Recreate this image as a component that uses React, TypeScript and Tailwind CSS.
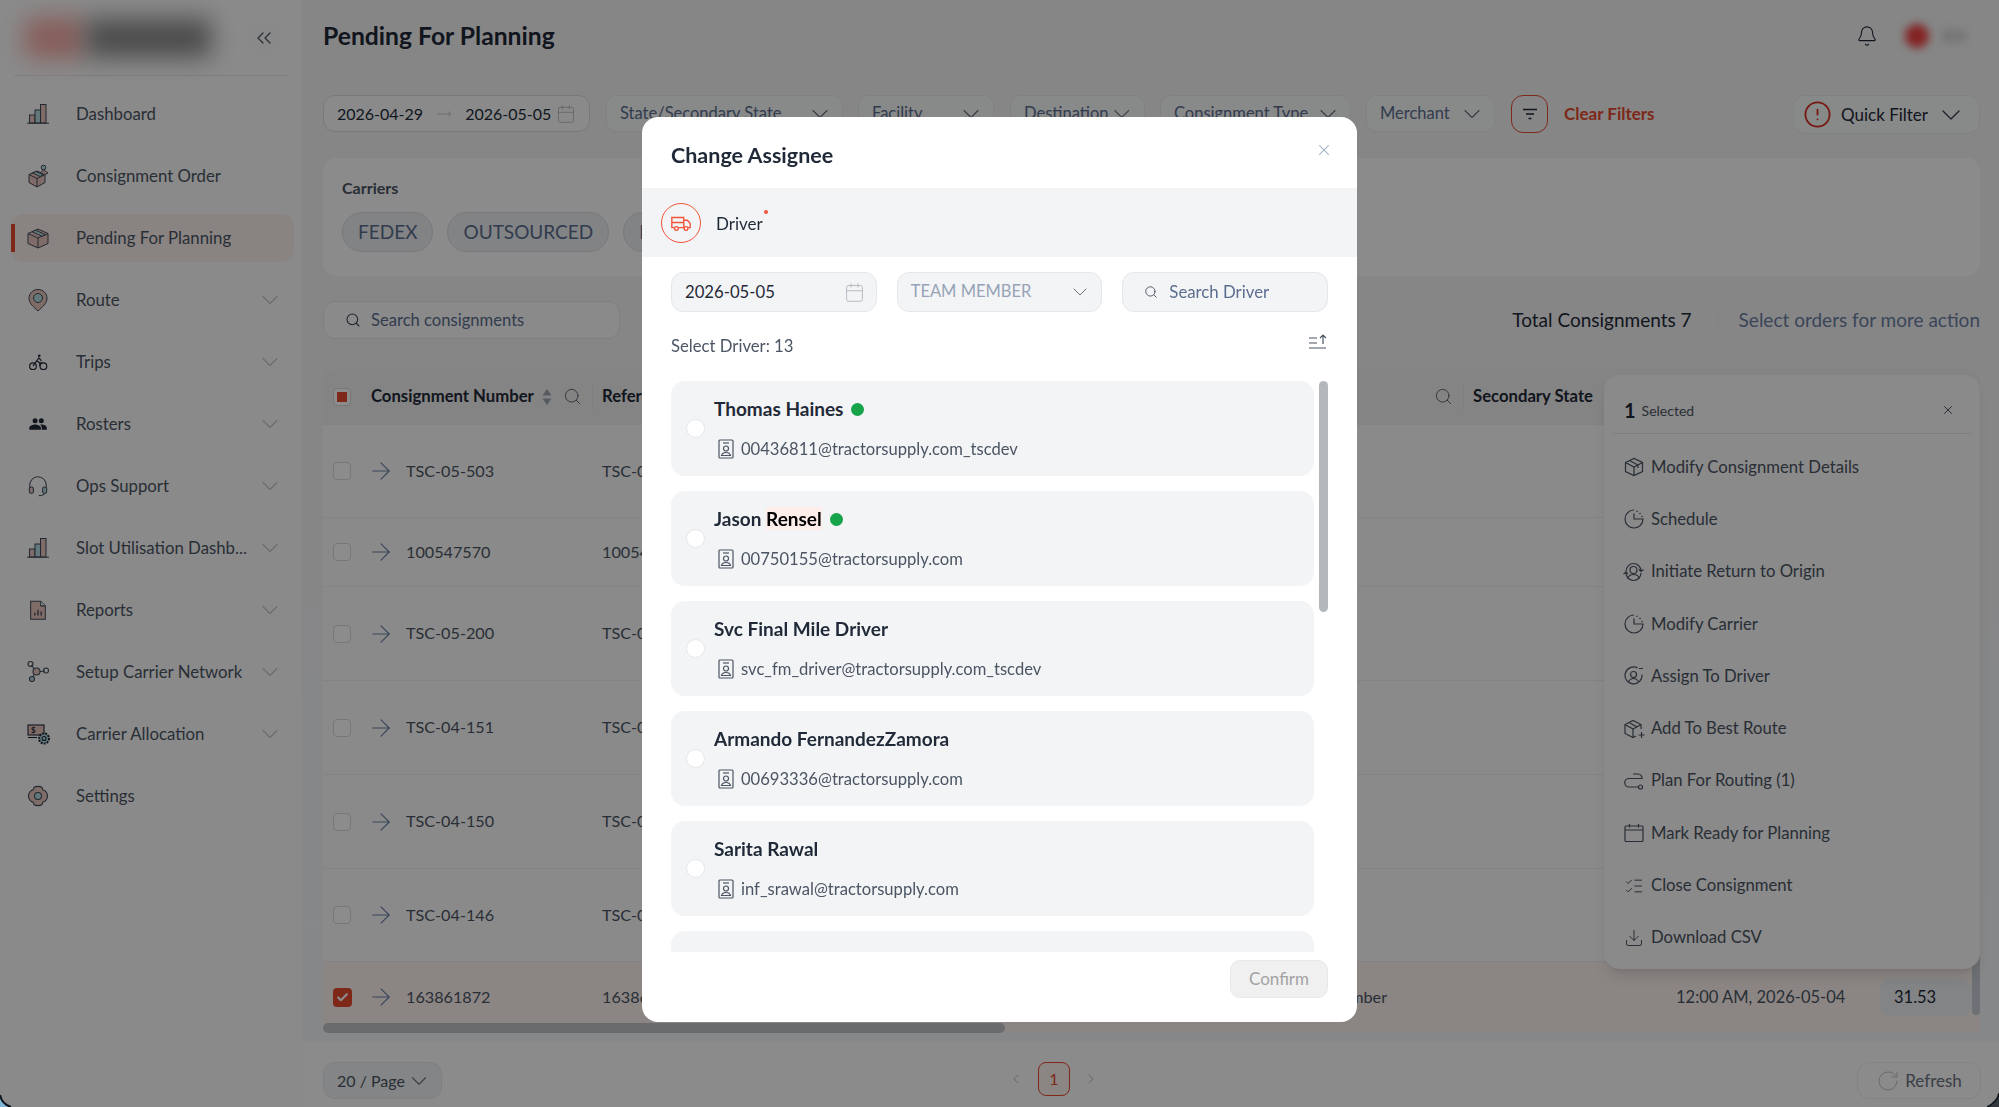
import {
  ArrowRight,
  Bell,
  Calendar,
  Check,
  ChevronDown,
  ChevronLeft,
  ChevronRight,
  ChevronsLeft,
  CircleAlert,
  Download,
  ListChecks,
  MoveRight,
  RotateCw,
  Search,
  X,
} from "lucide-react";
import type { ReactNode } from "react";

const PINK = "#e8c4bc";
const TEAL = "#b5dbe0";
const INK = "#3f4a57";

function BarsIcon() {
  return (
    <svg viewBox="0 0 24 24" className="h-6 w-6" fill="none" stroke={INK} strokeWidth="1">
      <rect x="3.5" y="13" width="5.5" height="8" fill={PINK} />
      <rect x="9" y="8" width="5.5" height="13" fill={TEAL} />
      <rect x="14.5" y="2.5" width="5.5" height="18.5" fill={PINK} />
      <path d="M1 21.2h22" />
    </svg>
  );
}

function BoxPersonIcon() {
  return (
    <svg viewBox="0 0 24 24" className="h-6 w-6" fill="none" stroke={INK} strokeWidth="1">
      <circle cx="17.5" cy="3.5" r="2.3" fill={TEAL} />
      <path d="M3 10.5 11 7l8 3.5v8L11 23l-8-4.5z" fill={PINK} />
      <path d="M3 10.5 11 14.5l8-4M11 14.5V23" />
      <path d="M6.5 8.800 14 12.5l3.5-1.700L10 7.5z" fill={TEAL} />
      <path d="M15 7.5c2-1.5 5-1 7 1.5l-3 1.5" fill={PINK} />
    </svg>
  );
}

function BoxIcon() {
  return (
    <svg viewBox="0 0 24 24" className="h-6 w-6" fill="none" stroke={INK} strokeWidth="1">
      <path d="M2 7.5 12 3l10 4.5v10L12 22 2 17.5z" fill={PINK} />
      <path d="M2 7.5 12 12l10-4.5M12 12v10" />
      <path d="M6 5.700 16 10.200l3.500-1.500L9.500 4.200z" fill={TEAL} />
    </svg>
  );
}

function PinIcon() {
  return (
    <svg viewBox="0 0 24 24" className="h-6 w-6" fill="none" stroke={INK} strokeWidth="1">
      <path d="M12 1.500c-5 0-9 3.800-9 8.700 0 5.300 5 9 9 12.800 4-3.800 9-7.500 9-12.800 0-4.900-4-8.700-9-8.700z" fill={PINK} />
      <circle cx="12" cy="10" r="4.500" fill={TEAL} />
    </svg>
  );
}

function BikeIcon() {
  return (
    <svg viewBox="0 0 24 24" className="h-5 w-5" fill="none" stroke="#1f2937" strokeWidth="1.4">
      <circle cx="6" cy="17" r="4" />
      <circle cx="18.500" cy="17" r="4" />
      <circle cx="13.500" cy="4.500" r="1.600" fill="#1f2937" stroke="none" />
      <path d="M6 17l4.500-6.500 3.500 2.500h3.500M10.500 10.500 13 7l3 3.500M14 13v4" />
    </svg>
  );
}

function PeopleIcon() {
  return (
    <svg viewBox="0 0 24 24" className="h-5 w-5" fill="#1f2937">
      <circle cx="8.500" cy="8" r="3" />
      <circle cx="16" cy="8" r="3" />
      <path d="M1.500 19v-2.500c0-2.500 4.500-4 7-4s7 1.500 7 4V19zM16.500 19v-2.500c0-1.500-.8-2.800-2-3.800 3-.6 8 .8 8 3.800V19z" />
    </svg>
  );
}

function HeadsetIcon() {
  return (
    <svg viewBox="0 0 24 24" className="h-[22px] w-[22px]" fill="none" stroke={INK} strokeWidth="1.1">
      <path d="M3 14v-3a9 9 0 0 1 18 0v3" />
      <rect x="2.500" y="13" width="4.500" height="7" rx="2" fill={PINK} />
      <rect x="17" y="13" width="4.500" height="7" rx="2" fill={TEAL} />
      <path d="M19 20c0 2-2 2.500-6 2.500" />
    </svg>
  );
}

function ReportIcon() {
  return (
    <svg viewBox="0 0 24 24" className="h-[22px] w-[22px]" fill="none" stroke={INK} strokeWidth="1.1">
      <path d="M4 2.500h11l5 5V22H4z" fill={PINK} />
      <path d="M15 2.500v5h5" fill="#fff" />
      <path d="M8.500 18v-3M12 18v-6M15.500 18v-4.500" strokeWidth="1.500" />
    </svg>
  );
}

function NetworkIcon() {
  return (
    <svg viewBox="0 0 24 24" className="h-6 w-6" fill="none" stroke={INK} strokeWidth="1.1">
      <path d="M5 5l5 6M10 12l9-1M10 12l-4 6" />
      <circle cx="4.500" cy="4" r="2.500" />
      <circle cx="10.500" cy="11.500" r="3.500" fill={PINK} />
      <circle cx="20" cy="10.500" r="2.500" />
      <circle cx="6" cy="19" r="2.500" fill={TEAL} />
    </svg>
  );
}

function MoneyGearIcon() {
  return (
    <svg viewBox="0 0 24 24" className="h-6 w-6" fill="none" stroke="#1f2937" strokeWidth="1.1">
      <rect x="2" y="3" width="16" height="10" fill={PINK} />
      <text x="5" y="11" fontSize="8" fontWeight="700" fill="#1f2937" stroke="none" fontFamily="Lato">
        $
      </text>
      <path d="M2 15.500h9" />
      <circle cx="18" cy="16.500" r="5" fill={TEAL} strokeDasharray="2 1" strokeWidth="2" />
      <circle cx="18" cy="16.500" r="2" />
    </svg>
  );
}

function GearIcon() {
  return (
    <svg viewBox="0 0 24 24" className="h-6 w-6" fill="none" stroke={INK} strokeWidth="1.1">
      <path
        d="M8 3.500c1.500-1.500 6.500-1.500 8 0l1 2.500c2.500 0 4.500 3.500 4.500 6s-2 6-4.500 6l-1 2.500c-1.500 1.500-6.500 1.500-8 0L7 18c-2.500 0-4.500-3.500-4.500-6S4.500 6 7 6z"
        fill={PINK}
      />
      <circle cx="12" cy="12" r="3.500" fill={TEAL} />
    </svg>
  );
}

const navItems: { label: string; icon: ReactNode; caret?: boolean; active?: boolean }[] = [
  { label: "Dashboard", icon: <BarsIcon /> },
  { label: "Consignment Order", icon: <BoxPersonIcon /> },
  { label: "Pending For Planning", icon: <BoxIcon />, active: true },
  { label: "Route", icon: <PinIcon />, caret: true },
  { label: "Trips", icon: <BikeIcon />, caret: true },
  { label: "Rosters", icon: <PeopleIcon />, caret: true },
  { label: "Ops Support", icon: <HeadsetIcon />, caret: true },
  { label: "Slot Utilisation Dashb...", icon: <BarsIcon />, caret: true },
  { label: "Reports", icon: <ReportIcon />, caret: true },
  { label: "Setup Carrier Network", icon: <NetworkIcon />, caret: true },
  { label: "Carrier Allocation", icon: <MoneyGearIcon />, caret: true },
  { label: "Settings", icon: <GearIcon /> },
];

function Sidebar() {
  return (
    <aside className="flex w-[302px] shrink-0 flex-col bg-[#fcfcfc]">
      <div className="flex h-[75px] items-center justify-between pl-6 pr-[20px]">
        <div className="flex items-center">
          <div className="h-[40px] w-[62px] rounded-xl bg-[#f4a8a2] blur-md" />
          <div className="h-[38px] w-[125px] bg-[#888888] blur-md" />
        </div>
        <div className="flex h-9 w-9 items-center justify-center rounded-full bg-[#fafafa]">
          <ChevronsLeft className="h-6 w-6 text-[#4b5563]" strokeWidth={1.3} />
        </div>
      </div>
      <div className="mx-[14px] border-t border-[#e8e8e8]" />
      <nav className="mt-[7px] flex flex-col">
        {navItems.map((item) => (
          <div key={item.label} className="relative ml-[11px] mr-[8px] flex h-[62px] items-center">
            {item.active && (
              <div className="absolute inset-x-0 top-[7px] h-[48px] rounded-xl bg-[#faf1ed]">
                <div className="absolute left-0 top-[10px] h-[28px] w-1 bg-[#e5492f]" />
              </div>
            )}
            <span className="relative ml-[15px] mr-[26px] flex w-6 shrink-0 justify-center">{item.icon}</span>
            <span className="relative text-[16.8px] text-[#4b5563]">{item.label}</span>
            {item.caret && (
              <ChevronDown className="absolute right-[10px] h-7 w-7 text-[#c4c4c4]" strokeWidth={1} />
            )}
          </div>
        ))}
      </nav>
    </aside>
  );
}

function FilterSelect({ label, className }: { label: string; className: string }) {
  return (
    <div
      className={`flex h-[37px] items-center justify-between rounded-[10px] border border-[#ececec] bg-[#f8f9fa] pl-[13px] pr-[8px] ${className}`}
    >
      <span className="text-[16.5px] text-[#5b6d8e]">{label}</span>
      <ChevronDown className="h-7 w-7 text-[#6b7280]" strokeWidth={1} />
    </div>
  );
}

function Toolbar() {
  return (
    <div className="mt-[23px] flex items-start">
      <div className="flex h-[37px] w-[267px] items-center rounded-[12px] border border-[#dcdcdc] bg-[#fbfbfb] pl-[13px]">
        <span className="text-base text-[#222b38]">2026-04-29</span>
        <MoveRight className="mx-[13px] h-[18px] w-[16px] text-[#bdbdbd]" strokeWidth={1.2} />
        <span className="text-base text-[#222b38]">2026-05-05</span>
        <Calendar className="ml-[5px] h-5 w-5 text-[#bdbdbd]" strokeWidth={1.1} />
      </div>
      <FilterSelect label="State/Secondary State" className="ml-[16px] w-[237px]" />
      <FilterSelect label="Facility" className="ml-[15px] w-[136px]" />
      <FilterSelect label="Destination" className="ml-[16px] w-[135px]" />
      <FilterSelect label="Consignment Type" className="ml-[15px] w-[191px]" />
      <FilterSelect label="Merchant" className="ml-[15px] w-[129px]" />
      <div className="ml-[16px] flex h-[38px] w-[37px] items-center justify-center rounded-[12px] border border-[#e5492f]">
        <svg viewBox="0 0 20 20" className="h-5 w-5" fill="none" stroke="#1f2937" strokeWidth="1.3">
          <path d="M3 5.500h14M6 10h8M8.500 14.500h3" />
        </svg>
      </div>
      <span className="ml-[16px] mt-[6px] text-[17px] font-bold text-[#e5492f]">Clear Filters</span>
      <div className="ml-auto flex h-[39px] w-[187px] items-center rounded-[12px] border border-[#ececec] bg-[#f8f9fa] pl-[9px]">
        <CircleAlert className="h-[29px] w-[29px] text-[#d92d20]" strokeWidth={1.5} />
        <span className="ml-[9px] text-[17px] text-[#1f2937]">Quick Filter</span>
        <ChevronDown className="ml-[7px] h-8 w-8 text-[#374151]" strokeWidth={1} />
      </div>
    </div>
  );
}

function Carriers() {
  return (
    <div className="mt-[24px] h-[118px] rounded-[14px] bg-[#fdfdfd] pl-[19px] pt-[20px]">
      <p className="text-base font-bold leading-5 text-[#4b5563]">Carriers</p>
      <div className="mt-[14px] flex gap-[14px]">
        {["FEDEX", "OUTSOURCED", "FLEET"].map((name) => (
          <span
            key={name}
            className="flex h-[40px] items-center rounded-full border border-[#d9dde3] bg-[#eceef1] px-[15px] text-[19px] text-[#5b6d8e]"
          >
            {name}
          </span>
        ))}
      </div>
    </div>
  );
}

function SearchRow() {
  return (
    <div className="mt-[25px] flex h-[38px] items-center">
      <div className="flex h-[38px] w-[297px] items-center rounded-[12px] border border-[#e8e8e8] bg-[#fbfbfb] pl-[21px]">
        <Search className="h-4 w-4 text-[#374151]" strokeWidth={1.6} />
        <span className="ml-[10px] text-[16.6px] text-[#5b6d8e]">Search consignments</span>
      </div>
      <span className="ml-auto text-[19px] text-[#1f2937]">Total Consignments 7</span>
      <div className="ml-[26px] mr-[20px] h-5 border-l border-[#eeeeee]" />
      <span className="text-[19px] text-[#6b7fa3]">Select orders for more action</span>
    </div>
  );
}

const rows: { id: string; ref: string; height: string }[] = [
  { id: "TSC-05-503", ref: "TSC-05-503", height: "h-[93px]" },
  { id: "100547570", ref: "100547570", height: "h-[69px]" },
  { id: "TSC-05-200", ref: "TSC-05-200", height: "h-[94px]" },
  { id: "TSC-04-151", ref: "TSC-04-151", height: "h-[94px]" },
  { id: "TSC-04-150", ref: "TSC-04-150", height: "h-[94px]" },
  { id: "TSC-04-146", ref: "TSC-04-146", height: "h-[93px]" },
];

function SortCarets() {
  return (
    <svg viewBox="0 0 10 18" className="h-[18px] w-[10px]" fill="#9ca3af">
      <path d="M5 1l4.500 6.500h-9zM5 17 .5 10.500h9z" />
    </svg>
  );
}

function ConsignmentTable() {
  return (
    <div className="relative mt-[30px] h-[664px] overflow-hidden rounded-t-[12px]">
      <div className="flex h-[56px] items-center border-b border-[#eeeeee] bg-[#f0f0f0]">
        <span className="ml-[10px] flex h-[18px] w-[18px] items-center justify-center rounded-[4px] border border-[#d9d9d9] bg-white">
          <span className="h-[10px] w-[10px] bg-[#e5492f]" />
        </span>
        <span className="ml-[20px] w-[168px] text-[16.7px] font-bold text-[#1f2937]">Consignment Number</span>
        <span className="ml-[3px] flex">
          <SortCarets />
        </span>
        <Search className="ml-[11px] h-[19px] w-[19px] text-[#4b5563]" strokeWidth={1.1} />
        <span className="ml-[10px] h-[26px] border-l border-[#e5e5e5]" />
        <span className="ml-[9px] w-[832px] text-[16.7px] font-bold text-[#1f2937]">Reference Number</span>
        <Search className="h-[19px] w-[19px] text-[#4b5563]" strokeWidth={1.1} />
        <span className="ml-[10px] h-[26px] border-l border-[#e5e5e5]" />
        <span className="ml-[9px] text-[16.7px] font-bold text-[#1f2937]">Secondary State</span>
      </div>
      {rows.map((row) => (
        <div key={row.id} className={`flex items-center border-b border-[#eeeeee] bg-[#fcfcfc] ${row.height}`}>
          <span className="ml-[10px] h-[18px] w-[18px] rounded-[4px] border border-[#d9d9d9] bg-white" />
          <ArrowRight className="ml-[16px] h-7 w-7 text-[#6b7fa3]" strokeWidth={1} />
          <span className="ml-[11px] w-[196px] text-[16.2px] text-[#4b5563]">{row.id}</span>
          <span className="text-[16.2px] text-[#4b5563]">{row.ref}</span>
        </div>
      ))}
      <div className="flex h-[70px] items-center bg-[#fdf3f0]">
        <span className="ml-[10px] flex h-[19px] w-[19px] items-center justify-center rounded-[4px] bg-[#e5492f]">
          <Check className="h-[13px] w-[13px] text-white" strokeWidth={4} />
        </span>
        <ArrowRight className="ml-[15px] h-7 w-7 text-[#6b7fa3]" strokeWidth={1} />
        <span className="ml-[11px] w-[196px] text-[16.2px] text-[#4b5563]">163861872</span>
        <span className="w-[727px] text-[16.2px] text-[#4b5563]">163861872</span>
        <span className="w-[347px] text-[16.2px] text-[#4b5563]">Number</span>
        <span className="w-[204px] text-[16.5px] text-[#4b5563]">12:00 AM, 2026-05-04</span>
        <span className="mr-[8px] flex h-[37px] flex-1 items-center rounded-[10px] bg-[#eef0f3] pl-[14px] text-[16.5px] text-[#1f2937]">
          31.53
        </span>
      </div>
      {/* scrollbars sit on top of the table */}
      <div className="absolute bottom-[18px] right-0 top-[340px] w-[8px] rounded-full bg-[#c6ccd3]" />
      <div className="absolute bottom-0 left-0 h-[10px] w-[682px] rounded-full bg-[#c0c3c7]" />
    </div>
  );
}

function Footer() {
  return (
    <div className="relative -ml-[21px] -mr-[19px] flex h-[65px] shrink-0 items-start bg-[#fdfdfd] pl-[21px] pr-[18px] pt-[20px]">
      <div className="flex h-[37px] w-[119px] items-center rounded-[12px] border border-[#e5e7eb] bg-[#f1f3f5] pl-[13px] text-base text-[#4b5563]">
        20 / Page
        <ChevronDown className="ml-[1px] h-[26px] w-[26px] text-[#6b7280]" strokeWidth={1} />
      </div>
      <div className="ml-[566px] flex items-center">
        <ChevronLeft className="h-4 w-4 text-[#bdbdbd]" strokeWidth={1.5} />
        <span className="ml-[14px] flex h-[34px] w-[32px] items-center justify-center rounded-[8px] border border-[#e5492f] bg-[#fdf4f1] text-base text-[#e5492f]">
          1
        </span>
        <ChevronRight className="ml-[13px] h-4 w-4 text-[#bdbdbd]" strokeWidth={1.5} />
      </div>
      <div className="ml-auto flex h-[37px] w-[124px] items-center justify-center rounded-[12px] border border-[#eeeeee] text-[17px] text-[#6b7280]">
        <RotateCw className="mr-[5px] h-6 w-6 text-[#c4c4c4]" strokeWidth={1} />
        Refresh
      </div>
    </div>
  );
}

function PanelBoxIcon() {
  return (
    <svg viewBox="0 0 20 20" className="h-5 w-5" fill="none" stroke="currentColor" strokeWidth="1.2">
      <path d="M1.500 5.500 10 1.500l8.500 4v9L10 18.500l-8.500-4z" />
      <path d="M1.500 5.500 10 10l8.500-4.500M10 10v8.500M5.500 3.500 14 8v3" />
    </svg>
  );
}

function PanelClockIcon() {
  return (
    <svg viewBox="0 0 20 20" className="h-5 w-5" fill="none" stroke="currentColor" strokeWidth="1.2">
      <path d="M10 1a9 9 0 1 0 9 9h-9V4.500" />
      <path d="M13 2.300v.01M16 4.500v.01M18 7.500v.01" strokeWidth="1.600" strokeLinecap="round" />
    </svg>
  );
}

function PanelReturnIcon() {
  return (
    <svg viewBox="0 0 22 20" className="-ml-[2px] h-5 w-[23px]" fill="none" stroke="currentColor" strokeWidth="1.2">
      <circle cx="11" cy="8" r="3.500" />
      <path d="M5 16.500c1-3 4-4 6-4s5 1 6 4" />
      <path d="M3.500 9.500C3.500 5 7 1.500 11 1.500S18.500 5 18.500 9M16.500 7.500l2 2 2.500-2M18.500 11c0 4-3.500 7.500-7.500 7.500S3.500 15 3.500 11M1 12l2.500-2 2 2" />
    </svg>
  );
}

function PanelAssignIcon() {
  return (
    <svg viewBox="0 0 20 20" className="h-5 w-5" fill="none" stroke="currentColor" strokeWidth="1.2">
      <circle cx="9.500" cy="8.500" r="3" />
      <path d="M4.500 16c1-2.500 3-3.500 5-3.500s4 1 5 3.500" />
      <path d="M13.500 1.900A8.500 8.500 0 1 0 18 8.500M15 2.500h4" />
    </svg>
  );
}

function PanelBoxPlusIcon() {
  return (
    <svg viewBox="0 0 22 20" className="-ml-[1px] h-5 w-[23px]" fill="none" stroke="currentColor" strokeWidth="1.2">
      <path d="M17.500 10V5.500L9.500 1.500l-8 4v9l8 4 3-1.500" />
      <path d="M1.500 5.500l8 4.500 8-4.500M9.500 10v8.500M5.500 3.500l8 4.500" />
      <path d="M18 13v6M15 16h6" />
    </svg>
  );
}

function PanelRouteIcon() {
  return (
    <svg viewBox="0 0 20 20" className="h-5 w-5" fill="none" stroke="currentColor" strokeWidth="1.2">
      <path d="M9 3h5a4 4 0 0 1 4 4.500H5a4 4 0 0 0 0 8.500h9.500" />
      <circle cx="16.500" cy="16" r="2" />
    </svg>
  );
}

function PanelCalendarIcon() {
  return (
    <svg viewBox="0 0 20 20" className="h-5 w-5" fill="none" stroke="currentColor" strokeWidth="1.2">
      <rect x="1" y="3" width="18" height="15.500" rx="1" />
      <path d="M1 7h18M5.500 1v3.500M14.500 1v3.500" />
    </svg>
  );
}

const actions: { label: string; icon: ReactNode }[] = [
  { label: "Modify Consignment Details", icon: <PanelBoxIcon /> },
  { label: "Schedule", icon: <PanelClockIcon /> },
  { label: "Initiate Return to Origin", icon: <PanelReturnIcon /> },
  { label: "Modify Carrier", icon: <PanelClockIcon /> },
  { label: "Assign To Driver", icon: <PanelAssignIcon /> },
  { label: "Add To Best Route", icon: <PanelBoxPlusIcon /> },
  { label: "Plan For Routing (1)", icon: <PanelRouteIcon /> },
  { label: "Mark Ready for Planning", icon: <PanelCalendarIcon /> },
  { label: "Close Consignment", icon: <ListChecks className="h-5 w-5" strokeWidth={1.2} /> },
  { label: "Download CSV", icon: <Download className="h-5 w-5" strokeWidth={1.2} /> },
];

function SelectionPanel() {
  return (
    <div className="absolute left-[1604px] top-[375px] h-[594px] w-[376px] rounded-[16px] bg-[#fbfbfb] px-[9px] shadow-lg">
      <div className="flex h-[59px] items-center border-b border-[#e8e8e8] pl-[11px] pr-[16px] pt-[11px]">
        <span className="text-[20px] font-bold text-[#1f2937]">1</span>
        <span className="ml-[6px] mt-[3px] text-sm text-[#4b5563]">Selected</span>
        <X className="ml-auto h-[14px] w-[14px] text-[#374151]" strokeWidth={1.5} />
      </div>
      <div className="mt-[7px] flex flex-col">
        {actions.map((action) => (
          <div key={action.label} className="flex h-[52.3px] items-center pl-[11px] text-[#4b5563]">
            <span className="flex w-[27px] shrink-0">{action.icon}</span>
            <span className="text-[16.7px]">{action.label}</span>
          </div>
        ))}
      </div>
    </div>
  );
}

const drivers = [
  { name: "Thomas Haines", email: "00436811@tractorsupply.com_tscdev", online: true },
  { name: "Jason Rensel", email: "00750155@tractorsupply.com", online: true, highlight: "Rensel" },
  { name: "Svc Final Mile Driver", email: "svc_fm_driver@tractorsupply.com_tscdev" },
  { name: "Armando FernandezZamora", email: "00693336@tractorsupply.com" },
  { name: "Sarita Rawal", email: "inf_srawal@tractorsupply.com" },
  { name: "Anand Mukherjee", email: "anand_m@tractorsupply.com" },
];

function BadgeIcon() {
  return (
    <svg viewBox="0 0 16 20" className="h-5 w-4 shrink-0" fill="none" stroke="#4b5563" strokeWidth="1.2">
      <rect x="1" y="1" width="14" height="18" rx="1" />
      <path d="M5 4h6" />
      <circle cx="8" cy="9.500" r="2.500" />
      <path d="M3.500 16.500c.5-2 2.500-3 4.500-3s4 1 4.500 3z" />
    </svg>
  );
}

function DriverCard({ driver }: { driver: (typeof drivers)[number] }) {
  const first = driver.highlight ? driver.name.replace(driver.highlight, "") : driver.name;
  return (
    <div className="flex h-[95px] w-[643px] shrink-0 items-center rounded-[14px] bg-[#f3f4f6] pl-[15px]">
      <span className="h-[19px] w-[19px] shrink-0 rounded-full border border-[#e5e7eb] bg-white" />
      <div className="ml-[9px] flex flex-col">
        <div className="flex h-[26px] items-center">
          <span className="text-[19px] font-bold text-[#1f2937]">
            {first}
            {driver.highlight && <span className="bg-[#fdeeea] text-black">{driver.highlight}</span>}
          </span>
          {driver.online && <span className="ml-[8px] h-[13px] w-[13px] rounded-full bg-[#16a34a]" />}
        </div>
        <div className="ml-[4px] mt-[15px] flex h-[24px] items-center">
          <BadgeIcon />
          <span className="ml-[7px] text-[16.6px] text-[#4b5563]">{driver.email}</span>
        </div>
      </div>
    </div>
  );
}

function AssigneeModal() {
  return (
    <div className="fixed inset-0 flex justify-center bg-black/45 pt-[117px]">
      <div className="relative flex h-[905px] w-[715px] flex-col overflow-hidden rounded-[16px] bg-white">
        <div className="flex h-[71px] shrink-0 items-center justify-between pl-[29px] pr-[24px] pt-[6px]">
          <h2 className="text-[21.5px] font-bold text-[#1f2937]">Change Assignee</h2>
          <X className="-mt-[12px] h-[18px] w-[18px] text-[#9aa8bd]" strokeWidth={1.4} />
        </div>
        <div className="flex h-[69px] shrink-0 items-center bg-[#f3f4f6] pl-[19px]">
          <span className="flex h-10 w-10 items-center justify-center rounded-full border border-[#f1533a]">
            <svg viewBox="0 0 24 24" className="h-[22px] w-[22px]" fill="none" stroke="#f1533a" strokeWidth="1.5">
              <path d="M2 6h13v11H2zM15 9h4l3 3.500V17h-7zM2 11.500h13" />
              <circle cx="7" cy="18" r="2" fill="#fff" />
              <circle cx="17.500" cy="18" r="2" fill="#fff" />
            </svg>
          </span>
          <span className="relative ml-[15px] mt-[3px] text-[17px] text-[#1f2937]">
            Driver
            <span className="absolute -right-[5px] top-[-1px] h-[4px] w-[4px] rounded-full bg-[#f1533a]" />
          </span>
        </div>
        <div className="mx-[29px] mt-[15px] grid shrink-0 grid-cols-3 gap-5">
          <div className="flex h-10 items-center justify-between rounded-[12px] border border-[#e5e7eb] bg-[#f3f4f6] pl-[13px] pr-[11px]">
            <span className="mt-[1px] text-[16.7px] text-[#1f2937]">2026-05-05</span>
            <Calendar className="h-[21px] w-[21px] text-[#b0b5bd]" strokeWidth={1} />
          </div>
          <div className="flex h-10 items-center justify-between rounded-[12px] border border-[#e5e7eb] bg-[#f3f4f6] pl-[13px] pr-[9px]">
            <span className="-mt-[2px] text-[16.5px] text-[#97a3b6]">TEAM MEMBER</span>
            <ChevronDown className="h-6 w-6 text-[#6b7280]" strokeWidth={1} />
          </div>
          <div className="flex h-10 items-center rounded-[12px] border border-[#e5e7eb] bg-[#f3f4f6] pl-[21px]">
            <Search className="h-[14px] w-[14px] text-[#4b5563]" strokeWidth={1.6} />
            <span className="ml-[11px] text-[16.8px] text-[#5b6d8e]">Search Driver</span>
          </div>
        </div>
        <div className="mx-[29px] mt-[15px] flex h-[40px] shrink-0 items-center justify-between">
          <span className="text-[16.7px] text-[#4b5563]">Select Driver: 13</span>
          <svg viewBox="0 0 20 20" className="-mt-[10px] h-5 w-5" fill="none" stroke="#4b5563" strokeWidth="1.2">
            <path d="M1 6h8M1 11h8M1 16h17M15 12V3M12 6l3-3 3 3" />
          </svg>
        </div>
        <div className="relative mx-[29px] mt-[14px] h-[571px] shrink-0 overflow-hidden">
          <div className="flex flex-col gap-[15px]">
            {drivers.map((d) => (
              <DriverCard key={d.email} driver={d} />
            ))}
          </div>
          <div className="absolute right-0 top-0 h-[231px] w-[9px] rounded-full bg-[#b4b8bd]" />
        </div>
        <div className="mx-[29px] mt-[8px] flex justify-end">
          <span className="flex h-[38px] w-[98px] items-center justify-center rounded-[10px] border border-[#e8e8e8] bg-[#f0f0f0] text-[17px] text-[#a3a3a3]">
            Confirm
          </span>
        </div>
      </div>
    </div>
  );
}

// dark window corners that are visible at the bottom of the capture
function WindowCorners() {
  return (
    <>
      <svg viewBox="0 0 14 14" className="fixed bottom-0 left-0 h-[14px] w-[14px]" fill="none">
        <path d="M0 2c1 5 5 10 11 12H0z" fill="#7fb4d8" />
        <path d="M0 2c1 5 5 10 11 12" stroke="#10161d" strokeWidth="2" />
      </svg>
      <svg viewBox="0 0 14 14" className="fixed bottom-0 right-0 h-[14px] w-[14px]" fill="none">
        <path d="M14 0C13 6 8 11 2 14h12z" fill="#33383f" />
        <path d="M14 0C13 6 8 11 2 14" stroke="#10161d" strokeWidth="1.5" />
      </svg>
    </>
  );
}

export default function App() {
  return (
    <div className="relative flex h-[1107px] w-[1999px] overflow-hidden bg-[#fcfcfc] font-['Lato',sans-serif]">
      <Sidebar />
      <main className="flex min-w-0 flex-1 flex-col bg-linear-to-b from-[#f4f4f4] via-[#f4f5f6] to-[#f3f7fb] pl-[21px] pr-[19px]">
        <header className="flex h-[72px] shrink-0 items-center justify-between">
          <h1 className="text-[24.7px] font-bold text-[#1f2937]">Pending For Planning</h1>
          <div className="flex items-center">
            <Bell className="h-[22px] w-[22px] text-[#1f2937]" strokeWidth={1.2} />
            <span className="ml-[27px] h-[24px] w-[24px] rounded-full bg-[#f04040] blur-[4px]" />
            <span className="ml-[13px] mr-[14px] h-[12px] w-[24px] bg-[#d4d4d4] blur-[4px]" />
          </div>
        </header>
        <Toolbar />
        <Carriers />
        <SearchRow />
        <ConsignmentTable />
        <div className="h-[9px] shrink-0" />
        <Footer />
      </main>
      <SelectionPanel />
      <AssigneeModal />
      <WindowCorners />
    </div>
  );
}
